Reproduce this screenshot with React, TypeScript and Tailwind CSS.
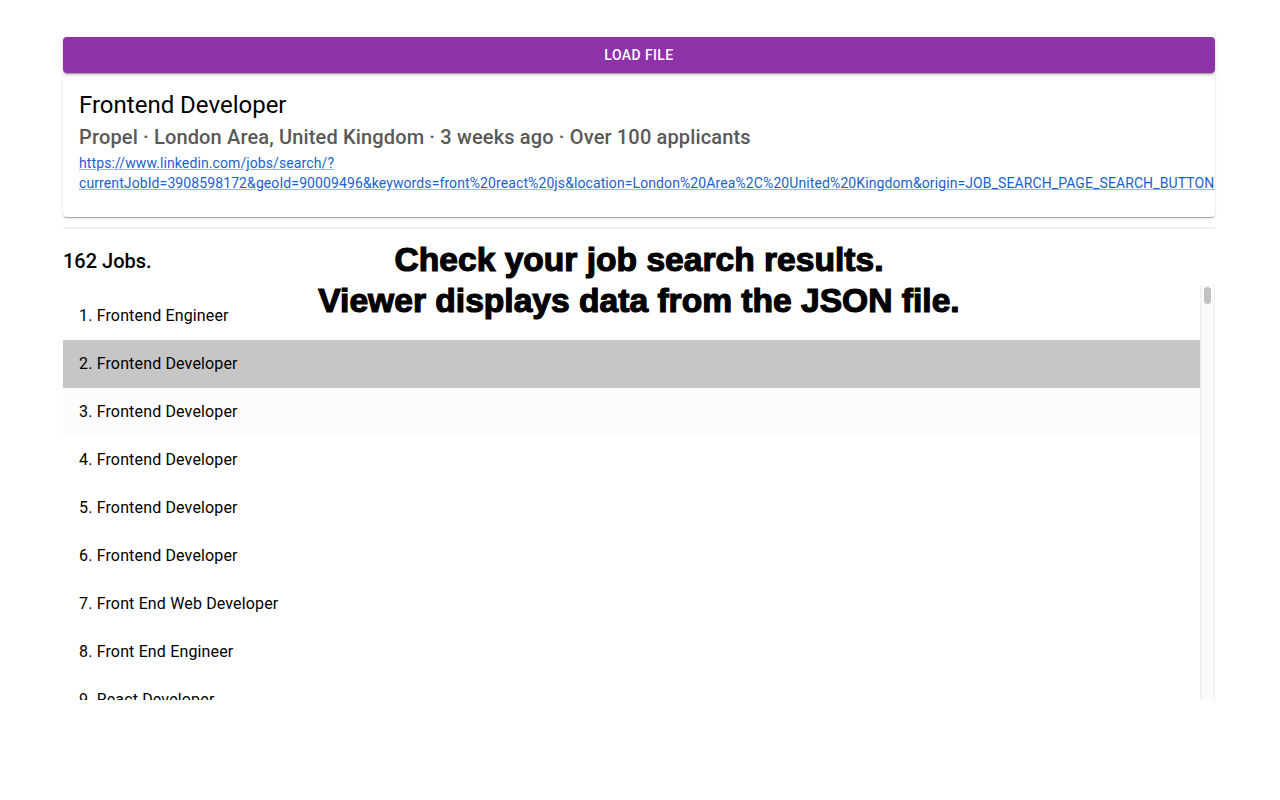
const jobs = [
    "Frontend Engineer",
    "Frontend Developer",
    "Frontend Developer",
    "Frontend Developer",
    "Frontend Developer",
    "Frontend Developer",
    "Front End Web Developer",
    "Front End Engineer",
    "React Developer",
    "Frontend Developer",
];

const url =
    "https://www.linkedin.com/jobs/search/?currentJobId=3908598172&geoId=90009496&keywords=front%20react%20js&location=London%20Area%2C%20United%20Kingdom&origin=JOB_SEARCH_PAGE_SEARCH_BUTTON&refresh=true";

const App = () => {
    return (
        <div className="min-h-[800px] bg-white font-['Roboto',sans-serif] text-black">
            <div className="relative ml-[63px] w-[1152px] pt-[37px]">
                {/* Load button */}
                <button className="h-9 w-full rounded bg-[#8e32a8] text-sm font-medium tracking-[0.4px] text-white shadow-[0_3px_1px_-2px_rgba(0,0,0,0.2),0_2px_2px_0_rgba(0,0,0,0.14),0_1px_5px_0_rgba(0,0,0,0.12)]">
                    LOAD FILE
                </button>

                {/* Selected job */}
                <div className="overflow-hidden rounded-b bg-white px-4 pt-4 pb-6 shadow-[0_2px_1px_-1px_rgba(0,0,0,0.2),0_1px_1px_0_rgba(0,0,0,0.14),0_1px_3px_0_rgba(0,0,0,0.12)]">
                    <div className="text-2xl leading-8">Frontend Developer</div>
                    <div className="text-xl leading-8 font-medium tracking-[0.15px] text-[#595959]">
                        Propel · London Area, United Kingdom · 3 weeks ago · Over 100 applicants
                    </div>
                    <a href="#" className="block text-sm leading-5 tracking-[0.1px] text-[#1a5fd0] underline decoration-[#9bb8e8]">
                        https://www.linkedin.com/jobs/search/?
                        <br />
                        <span className="whitespace-nowrap">{url.slice(38)}</span>
                    </a>
                </div>

                <div className="mt-[10px] h-[2px] bg-[#efefef]" />

                <div className="mt-5 text-xl leading-6 font-medium">162 Jobs.</div>

                {/* Job list */}
                <div className="mt-[12px] flex h-[415px]">
                    <ul className="flex-1 overflow-hidden pt-[7px]">
                        {jobs.map((title, i) => (
                            <li
                                key={i}
                                className={
                                    i === 1
                                        ? "flex h-12 items-center bg-[#c6c6c6] px-4 text-base tracking-[0.15px]"
                                        : i === 2
                                        ? "flex h-12 items-center bg-[#fcfcfc] px-4 text-base tracking-[0.15px]"
                                        : "flex h-12 items-center px-4 text-base tracking-[0.15px]"
                                }
                            >
                                {i + 1}. {title}
                            </li>
                        ))}
                    </ul>
                    <div className="w-[15px] border-x border-[#ececec] bg-[#fafafa] px-[3px] pt-[2px]">
                        <div className="h-[17px] rounded-full bg-[#c1c1c1]" />
                    </div>
                </div>

                {/* Overlay caption */}
                <div className="pointer-events-none absolute top-[239px] left-0 w-full text-center font-['Liberation_Sans',Arial,sans-serif] text-[33.6px] leading-[41px] font-bold text-black [-webkit-text-stroke:1.2px_black]">
                    <div>Check your job search results.</div>
                    <div>Viewer displays data from the JSON file.</div>
                </div>
            </div>
        </div>
    );
};

export default App;
